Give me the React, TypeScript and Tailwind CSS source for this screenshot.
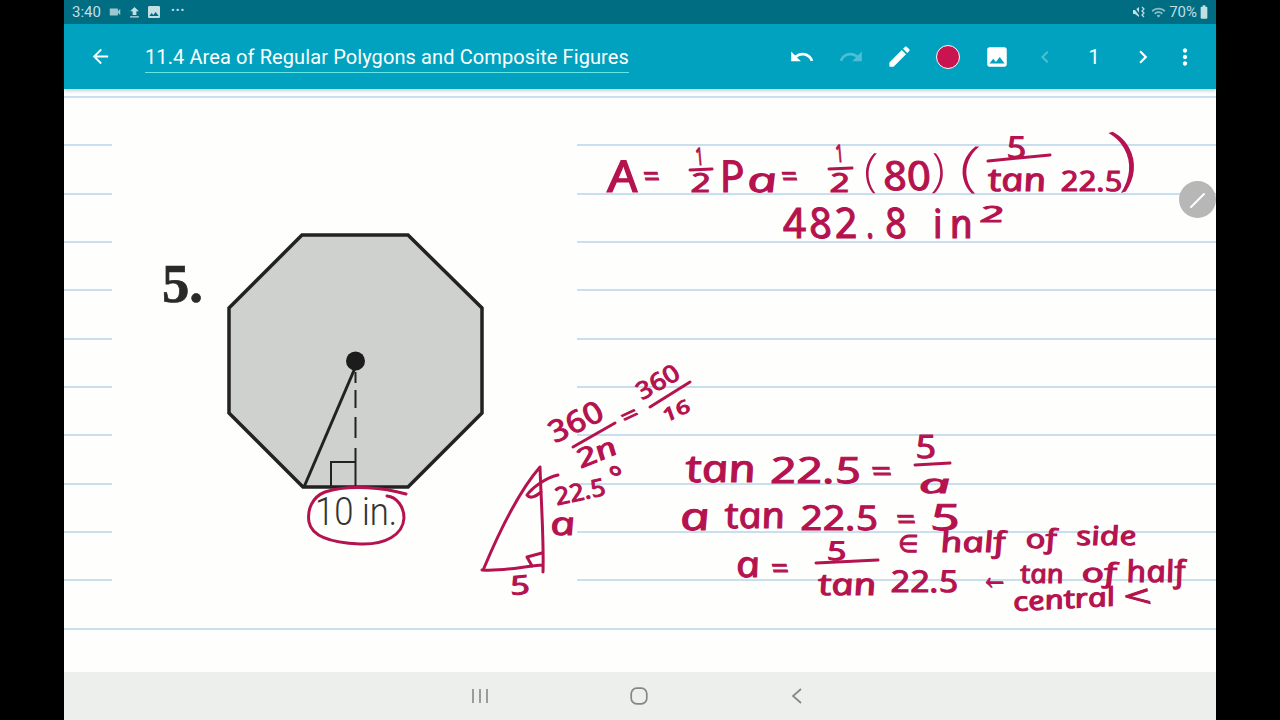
import type { ReactNode } from 'react';
import {
  MdArrowBack,
  MdBatteryStd,
  MdChevronLeft,
  MdChevronRight,
  MdEdit,
  MdFileUpload,
  MdImage,
  MdMoreVert,
  MdRedo,
  MdUndo,
  MdVideocam,
  MdWifi,
} from 'react-icons/md';

const RULES = [0, 1, 2, 3, 4, 5, 6, 7, 8, 9, 10, 11];

interface InkProps {
  x: number;
  y: number;
  w: number;
  size: number;
  rot?: number;
  spaced?: boolean;
  thin?: boolean;
  children: ReactNode;
}

// handwriting layer, coordinates are the same as on the screen
// the italic has the round "a" of the pen, skewX puts it back upright
function Ink({ x, y, w, size, rot = 0, spaced = false, thin = false, children }: InkProps) {
  return (
    <text
      fontSize={size}
      textLength={w}
      lengthAdjust={spaced ? 'spacing' : 'spacingAndGlyphs'}
      transform={`translate(${x} ${y}) rotate(${rot}) skewX(12)`}
      className={
        thin
          ? "fill-[#b5134f] font-['Open_Sans',sans-serif] italic font-light"
          : "fill-[#b5134f] stroke-[#b5134f] stroke-[1.1] font-['Open_Sans',sans-serif] italic"
      }
    >
      {children}
    </text>
  );
}

function Bar({ d }: { d: string }) {
  return <path d={d} className="fill-none stroke-[#b5134f] stroke-[3]" strokeLinecap="round" strokeLinejoin="round" />;
}

function StatusBar() {
  return (
    <div className="h-6 shrink-0 bg-[#006d83] flex items-center justify-between pl-2 pr-[4px] text-[#c2dfe4] font-['Roboto',sans-serif] text-[15px]">
      <div className="flex items-center">
        <span className="w-[35px]">3:40</span>
        <MdVideocam size={14} className="ml-[1px] opacity-80" />
        <MdFileUpload size={15} className="ml-[5px]" />
        <MdImage size={16} className="ml-[4px]" />
        <span className="ml-[9px] text-[11px] leading-none tracking-[1px] -mt-1">•••</span>
      </div>
      <div className="flex items-center">
        <svg width="14" height="14" viewBox="0 0 14 14" className="mr-[5px]">
          <path d="M1 5h2l4-3v10L3 9H1z" fill="currentColor" />
          <path d="M1 1l9 12" stroke="#006d83" strokeWidth="1.5" />
          <path d="M10 2l2 2-2 2 2 2-2 2 2 2" fill="none" stroke="currentColor" strokeWidth="1.2" />
        </svg>
        <MdWifi size={15} className="opacity-70" />
        <span className="ml-[3px]">70%</span>
        <MdBatteryStd size={16} className="-ml-[1px]" />
      </div>
    </div>
  );
}

function AppBar() {
  return (
    <div className="h-[65px] shrink-0 bg-[#00a2c0] flex items-center text-white font-['Roboto',sans-serif] relative z-10 shadow-[0_2px_3px_rgba(0,90,110,0.25)]">
      <MdArrowBack size={23} className="ml-[25px]" />
      <div className="ml-[33px] w-[484px] h-[33px] border-b border-[#62e6e6] text-[20px] tracking-[0.1px] leading-[34px] whitespace-nowrap">
        11.4 Area of Regular Polygons and Composite Figures
      </div>
      <div className="ml-auto flex items-center">
        <MdUndo size={26} className="mr-[23px]" />
        <MdRedo size={26} className="mr-[22px] opacity-30" />
        <MdEdit size={27} className="mr-[23px]" />
        <span className="w-6 h-6 rounded-full bg-[#c9154f] border border-white mr-[24px]" />
        <MdImage size={26} className="mr-[23px]" />
        <MdChevronLeft size={24} className="mr-[25px] opacity-30" />
        <span className="w-[24px] text-center text-[20px] leading-none mr-[24px]">1</span>
        <MdChevronRight size={26} className="mr-[16px]" />
        <MdMoreVert size={26} className="mr-[18px]" />
      </div>
    </div>
  );
}

function Figure() {
  return (
    <g>
      <polygon
        points="302,235 408,235 482,308 482,413 408,487 303,487 229,413 229,308"
        className="fill-[#cfd1cf] stroke-[#222222] stroke-[3.5]"
      />
      <path d="M304 487L355 368" className="stroke-[#222222] stroke-[3]" />
      <path d="M355.5 372V383M355.5 390V408M355.5 417V438M355.5 448V487" className="stroke-[#222222] stroke-[2]" />
      <path d="M331 487V462H355" className="fill-none stroke-[#222222] stroke-[2]" />
      <circle cx="355.5" cy="361" r="9.5" className="fill-[#1c1c1c]" />
      <text
        x="162"
        y="302"
        fontSize="55"
        textLength="41"
        lengthAdjust="spacingAndGlyphs"
        className="fill-[#2a2a2a] stroke-[#2a2a2a] stroke-[0.7] font-['Liberation_Serif',serif] font-bold"
      >
        5.
      </text>
      <text
        x="315"
        y="525"
        fontSize="38"
        textLength="82"
        lengthAdjust="spacingAndGlyphs"
        className="fill-[#333333] font-['Roboto',sans-serif] font-light"
      >
        10 in.
      </text>
    </g>
  );
}

function Handwriting() {
  return (
    <g>
      <Bar d="M406 494C385 488 350 484 325 492C312 497 307 510 309 522C312 538 335 543 360 544C385 545 403 535 404 518C404 507 397 497 387 496" />

      <Ink x={610} y={192} w={30} size={44}>A</Ink>
      <Ink x={645} y={186} w={16} size={28}>=</Ink>
      <Ink x={697} y={165} w={8} size={24}>1</Ink>
      <Bar d="M690 170L712 169" />
      <Ink x={692} y={192} w={20} size={26}>2</Ink>
      <Ink x={722} y={192} w={25} size={44}>P</Ink>
      <Ink x={749} y={192} w={30} size={34}>a</Ink>
      <Ink x={783} y={186} w={16} size={28}>=</Ink>
      <Ink x={837} y={162} w={8} size={24}>1</Ink>
      <Bar d="M829 169L852 168" />
      <Ink x={831} y={192} w={20} size={26}>2</Ink>
      <Ink x={866} y={186} w={14} size={46} thin>(</Ink>
      <Ink x={885} y={190} w={48} size={40}>80</Ink>
      <Ink x={934} y={186} w={14} size={46} thin>)</Ink>
      <Ink x={962} y={185} w={20} size={54} thin>(</Ink>
      <Ink x={1008} y={158} w={20} size={30}>5</Ink>
      <Bar d="M988 161L1050 155" />
      <Ink x={990} y={191} w={58} size={32}>tan</Ink>
      <Ink x={1062} y={191} w={62} size={28}>22.5</Ink>
      <Ink x={1122} y={181} w={26} size={70} rot={-17} thin>)</Ink>

      <Ink x={785} y={238} w={75} size={42} spaced>482</Ink>
      <Ink x={868} y={238} w={8} size={42}>.</Ink>
      <Ink x={887} y={238} w={22} size={42}>8</Ink>
      <Ink x={935} y={238} w={40} size={40} spaced>in</Ink>
      <Ink x={981} y={222} w={24} size={22}>2</Ink>

      <Ink x={556} y={443} w={57} size={30} rot={-26}>360</Ink>
      <Bar d="M573 447L615 423" />
      <Ink x={582} y={468} w={41} size={26} rot={-22}>2n</Ink>
      <Ink x={626} y={425} w={17} size={22} rot={-25}>=</Ink>
      <Ink x={643} y={400} w={46} size={24} rot={-30}>360</Ink>
      <Bar d="M650 407L690 382" />
      <Ink x={667} y={422} w={28} size={18} rot={-25}>16</Ink>
      <Ink x={558} y={505} w={51} size={24} rot={-12}>22.5</Ink>
      <Ink x={612} y={488} w={14} size={30}>°</Ink>
      <Ink x={552} y={535} w={25} size={32}>a</Ink>
      <Ink x={512} y={595} w={20} size={26} rot={-5}>5</Ink>

      <Bar d="M540 467C520 490 500 530 484 568M540 467C541 500 544 540 543 572M482 570C500 572 525 566 543 565" />
      <Bar d="M527 557L532 566M527 557L542 553" />
      <Bar d="M558 475C545 478 532 488 527 495C530 499 535 497 541 492" />

      <Ink x={688} y={482} w={70} size={38}>tan</Ink>
      <Ink x={772} y={483} w={91} size={36}>22.5</Ink>
      <Ink x={873} y={481} w={20} size={28}>=</Ink>
      <Ink x={917} y={458} w={21} size={32}>5</Ink>
      <Bar d="M915 465L950 463" />
      <Ink x={920} y={493} w={32} size={26}>a</Ink>

      <Ink x={682} y={530} w={30} size={38}>a</Ink>
      <Ink x={727} y={528} w={60} size={36}>tan</Ink>
      <Ink x={802} y={530} w={78} size={34}>22.5</Ink>
      <Ink x={898} y={529} w={19} size={28}>=</Ink>
      <Ink x={932} y={530} w={30} size={36}>5</Ink>

      <Ink x={738} y={577} w={24} size={36}>a</Ink>
      <Ink x={773} y={578} w={17} size={28}>=</Ink>
      <Ink x={828} y={560} w={20} size={26}>5</Ink>
      <Bar d="M816 563L878 560" />
      <Ink x={820} y={595} w={58} size={30}>tan</Ink>
      <Ink x={892} y={592} w={68} size={30}>22.5</Ink>

      <Ink x={898} y={552} w={20} size={24}>∈</Ink>
      <Ink x={942} y={552} w={65} size={28}>half</Ink>
      <Ink x={1027} y={548} w={31} size={26}>of</Ink>
      <Ink x={1078} y={545} w={60} size={26}>side</Ink>
      <Ink x={982} y={589} w={28} size={38}>←</Ink>
      <Ink x={1022} y={583} w={43} size={26}>tan</Ink>
      <Ink x={1083} y={582} w={35} size={26}>of</Ink>
      <Ink x={1128} y={582} w={59} size={30}>half</Ink>
      <Ink x={1015} y={611} w={102} size={26} rot={-3}>central</Ink>
      <Ink x={1125} y={607} w={27} size={30}>&lt;</Ink>
    </g>
  );
}

function Sheet() {
  return (
    <div className="flex-1 relative overflow-hidden bg-[#fefffd] pt-[7px] flex flex-col gap-[46.33px]">
      {RULES.map((n) => (
        <div key={n} className="h-[2px] shrink-0 bg-[#c9deee]" />
      ))}
      <div className="absolute left-12 top-[11px] w-[465px] h-[515px] bg-[#fefffd]" />
      <svg viewBox="64 89 1152 583" className="absolute inset-0 w-full h-full">
        <Figure />
        <Handwriting />
      </svg>
      <div className="absolute left-[1115px] top-[92px] w-[37px] h-[37px] rounded-full bg-[#b6b7b6] flex items-center justify-center">
        <svg width="18" height="18" viewBox="0 0 18 18">
          <path d="M2 16L15 3" stroke="white" strokeWidth="2" strokeLinecap="round" />
        </svg>
      </div>
    </div>
  );
}

function NavBar() {
  return (
    <div className="h-12 shrink-0 bg-[#edefec] relative flex items-center text-[#858785]">
      <svg width="16" height="16" viewBox="0 0 16 16" className="ml-[408px]">
        <path d="M1 1V15M8 1V15M15 1V15" fill="none" stroke="currentColor" strokeWidth="1.6" />
      </svg>
      <svg width="18" height="18" viewBox="0 0 18 18" className="ml-[142px]">
        <rect x="1.2" y="1.2" width="15.6" height="15.6" rx="5.5" fill="none" stroke="currentColor" strokeWidth="1.7" />
      </svg>
      <svg width="12" height="16" viewBox="0 0 12 16" className="ml-[143px]">
        <path d="M10 1L2 8L10 15" fill="none" stroke="currentColor" strokeWidth="1.7" />
      </svg>
    </div>
  );
}

export default function App() {
  return (
    <div className="h-screen w-screen bg-black flex justify-center overflow-hidden">
      <div className="w-[1152px] h-full flex flex-col">
        <StatusBar />
        <AppBar />
        <Sheet />
        <NavBar />
      </div>
    </div>
  );
}
